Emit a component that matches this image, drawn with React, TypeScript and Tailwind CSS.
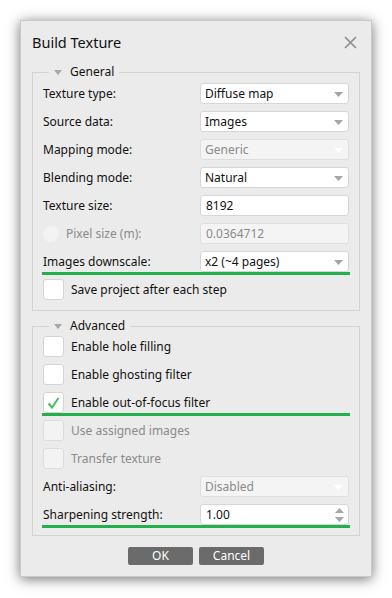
import React from "react";

const font = { fontFamily: '"Noto Sans", "Open Sans", sans-serif' };

function Arrow({ disabled }: { disabled?: boolean }) {
  return (
    <svg width="9" height="5" viewBox="0 0 9 5" className="absolute right-[5px] top-[8px]">
      <path d="M0 0 H9 L4.5 5 Z" fill={disabled ? "#ffffff" : "#a6a6a6"} />
    </svg>
  );
}

function Combo({ value, disabled }: { value: string; disabled?: boolean }) {
  return (
    <div
      className={`relative w-[149px] h-[21px] rounded-[3px] border flex items-center pl-[4px] ${
        disabled ? "bg-[#f4f4f4] border-[#dedede] text-[#8a8a8a]" : "bg-white border-[#d6d6d6] text-[#111]"
      }`}
    >
      <span className="leading-none">{value}</span>
      <Arrow disabled={disabled} />
    </div>
  );
}

function Input({ value, disabled, spin }: { value: string; disabled?: boolean; spin?: boolean }) {
  return (
    <div
      className={`relative w-[149px] h-[21px] rounded-[3px] border flex items-center pl-[5px] ${
        disabled ? "bg-[#f4f4f4] border-[#dedede] text-[#8a8a8a]" : "bg-white border-[#d6d6d6] text-[#111]"
      }`}
    >
      <span className="leading-none">{value}</span>
      {spin && (
        <svg width="9" height="14" viewBox="0 0 9 14" className="absolute right-[4px] top-[3px]">
          <path d="M0 5 H9 L4.5 0 Z" fill="#a6a6a6" />
          <path d="M0 9 H9 L4.5 14 Z" fill="#a6a6a6" />
        </svg>
      )}
    </div>
  );
}

function Row({ label, children, disabled }: { label: string; children: React.ReactNode; disabled?: boolean }) {
  return (
    <div className="flex items-center justify-between h-[21px]">
      <span className={disabled ? "text-[#8a8a8a]" : "text-[#111]"}>{label}</span>
      {children}
    </div>
  );
}

function Check({ label, checked, disabled }: { label: string; checked?: boolean; disabled?: boolean }) {
  return (
    <div className="flex items-center h-[21px]">
      <div
        className={`w-[21px] h-[21px] rounded-[3px] border flex items-center justify-center ${
          disabled ? "bg-[#f3f3f3] border-[#dcdcdc]" : "bg-white border-[#d4d4d4]"
        }`}
      >
        {checked && (
          <svg width="13" height="12" viewBox="0 0 13 12">
            <path d="M1.5 6.5 L5 10.5 L11.5 1" stroke="#3dc15c" strokeWidth="2" fill="none" />
          </svg>
        )}
      </div>
      <span className={`ml-[7px] ${disabled ? "text-[#8a8a8a]" : "text-[#111]"}`}>{label}</span>
    </div>
  );
}

function Green() {
  return <span className="absolute left-[-1px] right-[-1px] top-full h-[3px] bg-[#22b04b]" />;
}

function Group({ title, children }: { title: string; children: React.ReactNode }) {
  return (
    <fieldset className="border border-[#d3d3d3] px-[10px] pb-[10px]">
      <legend className="ml-[6px] px-[5px] flex items-center h-[16px]">
        <svg width="8" height="5" viewBox="0 0 8 5" className="mr-[8px]">
          <path d="M0 0 H8 L4 5 Z" fill="#a8a8a8" />
        </svg>
        <span className="text-[#111]">{title}</span>
      </legend>
      {children}
    </fieldset>
  );
}

export default function App() {
  return (
    <div className="w-[392px] h-[598px] bg-white pt-[20px] pl-[20px] text-[12px]" style={font}>
      <div className="w-[352px] h-[557px] bg-[#ebebeb] border border-[#c9c9c9] shadow-[0_2px_12px_rgba(0,0,0,0.55)] flex flex-col px-[11px]">
        <div className="flex items-center justify-between h-[43px]">
          <span className="text-[14.5px] text-[#111]">Build Texture</span>
          <svg width="13" height="13" viewBox="0 0 13 13" className="mr-[3px]">
            <path d="M1 1 L12 12 M12 1 L1 12" stroke="#8c8c8c" strokeWidth="1.6" />
          </svg>
        </div>
        <Group title="General">
          <div className="flex flex-col gap-[7px] pt-[3px]">
            <Row label="Texture type:"><Combo value="Diffuse map" /></Row>
            <Row label="Source data:"><Combo value="Images" /></Row>
            <Row label="Mapping mode:" ><Combo value="Generic" disabled /></Row>
            <Row label="Blending mode:"><Combo value="Natural" /></Row>
            <Row label="Texture size:"><Input value="8192" /></Row>
            <div className="flex items-center justify-between h-[21px]">
              <div className="flex items-center">
                <span className="w-[16px] h-[16px] rounded-full bg-[#f3f3f3]" />
                <span className="ml-[7px] text-[#8a8a8a]">Pixel size (m):</span>
              </div>
              <Input value="0.0364712" disabled />
            </div>
            <div className="relative">
              <Row label="Images downscale:"><Combo value="x2 (~4 pages)" /></Row>
              <Green />
            </div>
            <Check label="Save project after each step" />
          </div>
        </Group>
        <div className="h-[7px]" />
        <Group title="Advanced">
          <div className="flex flex-col gap-[7px] pt-[2px]">
            <Check label="Enable hole filling" />
            <Check label="Enable ghosting filter" />
            <div className="relative">
              <Check label="Enable out-of-focus filter" checked />
              <Green />
            </div>
            <Check label="Use assigned images" disabled />
            <Check label="Transfer texture" disabled />
            <Row label="Anti-aliasing:"><Combo value="Disabled" disabled /></Row>
            <div className="relative">
              <Row label="Sharpening strength:"><Input value="1.00" spin /></Row>
              <Green />
            </div>
          </div>
        </Group>
        <div className="flex justify-center gap-[6px] mt-[11px]">
          <button className="w-[65px] h-[18px] rounded-[2px] bg-[#6b6b6b] text-white text-[12px] leading-none">OK</button>
          <button className="w-[65px] h-[18px] rounded-[2px] bg-[#6b6b6b] text-white text-[12px] leading-none">Cancel</button>
        </div>
      </div>
    </div>
  );
}
